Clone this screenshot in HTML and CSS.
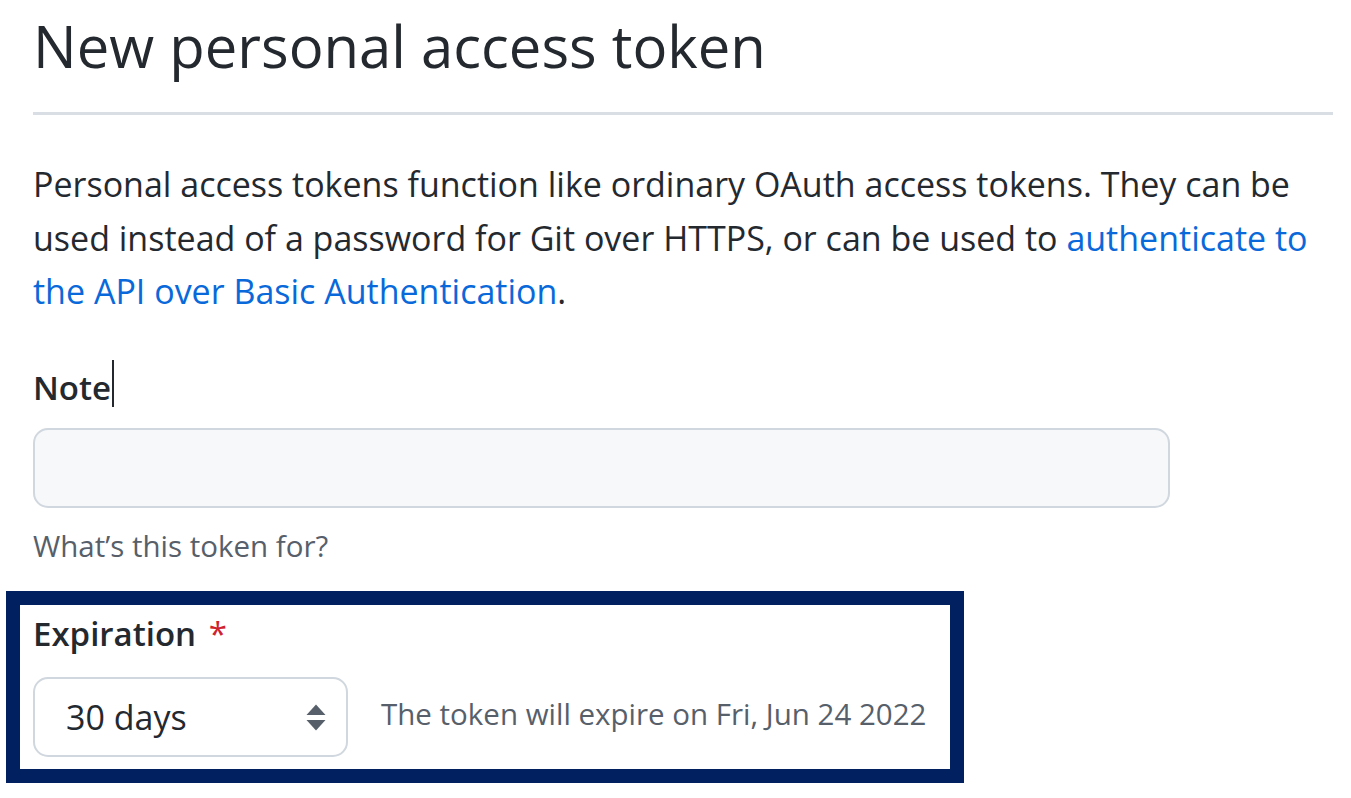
FILE: index.html
```html
<!DOCTYPE html>
<html lang="en">
<head>
<meta charset="utf-8">
<title>New personal access token</title>
<link rel="stylesheet" href="styles.css">
</head>
<body>
<main class="page">
  <div class="subhead">
    <h1 class="subhead-heading">New personal access token</h1>
  </div>
  <p class="intro">Personal access tokens function like ordinary OAuth access tokens. They can be used instead of a password for Git over HTTPS, or can be used to <a href="#" class="link">authenticate to</a> <a href="#" class="link">the API over Basic Authentication</a>.</p>

  <div class="form-group">
    <label class="form-label">Note<span class="caret"></span></label>
    <div class="text-input"></div>
    <p class="note">What’s this token for?</p>
  </div>

  <div class="highlight">
    <label class="form-label">Expiration <span class="required">*</span></label>
    <div class="expiry-row">
      <div class="select">
        <span class="select-value">30 days</span>
        <svg class="select-arrows" width="20" height="29" viewBox="0 0 20 29" aria-hidden="true">
          <path d="M10 1.5 L19.5 12 L0.5 12 Z" fill="#57606a"/>
          <path d="M0.5 17 L19.5 17 L10 27.5 Z" fill="#57606a"/>
        </svg>
      </div>
      <span class="expiry-note">The token will expire on Fri, Jun 24 2022</span>
    </div>
  </div>
</main>
</body>
</html>
```
FILE: styles.css
```css
html, body {
  margin: 0;
  padding: 0;
  background: #ffffff;
}

body {
  font-family: "Open Sans", "Noto Sans", sans-serif;
  color: #24292f;
}

.page {
  width: 1300px;
  padding-left: 33px;
}

.subhead {
  padding-top: 10px;
  padding-bottom: 30px;
  border-bottom: 3px solid #d8dee4;
}

.subhead-heading {
  margin: 0;
  font-size: 58px;
  font-weight: 400;
  line-height: 72px;
  color: #24292f;
}

.intro {
  margin: 43px 0 0;
  font-size: 34px;
  line-height: 53.5px;
}

.link {
  color: #0969da;
  text-decoration: none;
}

.form-group {
  margin-top: 44px;
}

.form-label {
  display: block;
  font-size: 33px;
  font-weight: 600;
  line-height: 48px;
  height: 48px;
}

.caret {
  display: inline-block;
  width: 2px;
  height: 47px;
  margin-top: -3px;
  margin-left: 1px;
  vertical-align: -7px;
  background: #24292f;
}

.text-input {
  margin-top: 17px;
  box-sizing: border-box;
  width: 1137px;
  height: 80px;
  border: 2px solid #d0d7de;
  border-radius: 15px;
  background: #f6f8fa;
}

.note {
  margin: 16px 0 0;
  font-size: 29.5px;
  line-height: 44px;
  color: #57606a;
}

.highlight {
  box-sizing: border-box;
  width: 958px;
  margin-top: 23px;
  margin-left: -27px;
  border: 14px solid #002060;
  padding: 5px 0 12px 13px;
}

.expiry-row {
  display: flex;
  align-items: center;
  gap: 33px;
  margin-top: 19px;
}

.select {
  box-sizing: border-box;
  width: 315px;
  height: 80px;
  display: flex;
  align-items: center;
  justify-content: space-between;
  padding: 0 20px 0 31px;
  border: 2px solid #d0d7de;
  border-radius: 15px;
  background: #ffffff;
}

.select-value {
  font-size: 34px;
  color: #24292f;
}

.select-arrows {
  display: block;
  margin-top: 1px;
}

.expiry-note {
  font-size: 29.5px;
  color: #57606a;
  margin-bottom: 7px;
}

.required {
  color: #cf222e;
  font-weight: 400;
  margin-left: 4px;
}
```
